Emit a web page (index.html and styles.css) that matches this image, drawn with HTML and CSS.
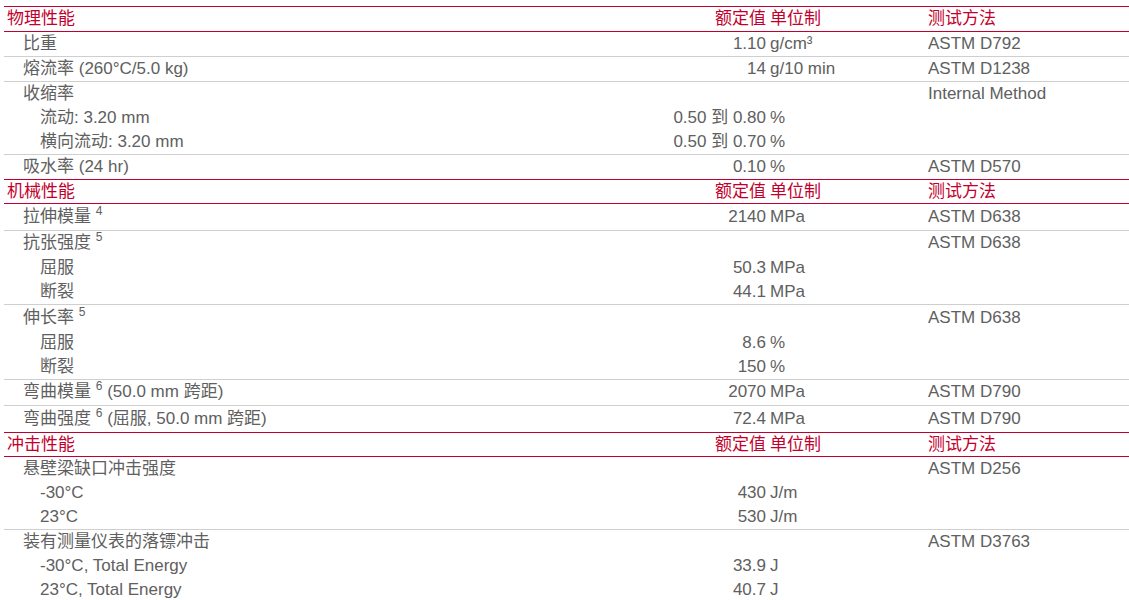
FILE: index.html
```html
<!DOCTYPE html>
<html lang="zh-CN">
<head>
<meta charset="utf-8">
<title>性能表</title>
<link rel="stylesheet" href="styles.css">
</head>
<body>
<table class="props">
  <colgroup>
    <col class="c-label">
    <col class="c-value">
    <col class="c-unit">
    <col class="c-method">
  </colgroup>
  <tbody>
    <tr class="hdr first"><th class="sec">物理性能</th><th class="val">额定值</th><th class="unit">单位制</th><th class="method">测试方法</th></tr>
    <tr class="end"><td class="l1">比重</td><td class="val">1.10</td><td class="unit">g/cm³</td><td class="method">ASTM D792</td></tr>
    <tr class="end"><td class="l1">熔流率 (260°C/5.0 kg)</td><td class="val">14</td><td class="unit">g/10 min</td><td class="method">ASTM D1238</td></tr>
    <tr><td class="l1">收缩率</td><td class="val"></td><td class="unit"></td><td class="method">Internal Method</td></tr>
    <tr><td class="l2">流动: 3.20 mm</td><td class="val">0.50 到 0.80</td><td class="unit">%</td><td class="method"></td></tr>
    <tr class="end"><td class="l2">横向流动: 3.20 mm</td><td class="val">0.50 到 0.70</td><td class="unit">%</td><td class="method"></td></tr>
    <tr><td class="l1">吸水率 (24 hr)</td><td class="val">0.10</td><td class="unit">%</td><td class="method">ASTM D570</td></tr>

    <tr class="hdr"><th class="sec">机械性能</th><th class="val">额定值</th><th class="unit">单位制</th><th class="method">测试方法</th></tr>
    <tr class="end sup-row"><td class="l1">拉伸模量 <sup>4</sup></td><td class="val">2140</td><td class="unit">MPa</td><td class="method">ASTM D638</td></tr>
    <tr class="sup-row"><td class="l1">抗张强度 <sup>5</sup></td><td class="val"></td><td class="unit"></td><td class="method">ASTM D638</td></tr>
    <tr><td class="l2">屈服</td><td class="val">50.3</td><td class="unit">MPa</td><td class="method"></td></tr>
    <tr class="end"><td class="l2">断裂</td><td class="val">44.1</td><td class="unit">MPa</td><td class="method"></td></tr>
    <tr class="sup-row"><td class="l1">伸长率 <sup>5</sup></td><td class="val"></td><td class="unit"></td><td class="method">ASTM D638</td></tr>
    <tr><td class="l2">屈服</td><td class="val">8.6</td><td class="unit">%</td><td class="method"></td></tr>
    <tr class="end"><td class="l2">断裂</td><td class="val">150</td><td class="unit">%</td><td class="method"></td></tr>
    <tr class="end sup-row"><td class="l1">弯曲模量 <sup>6</sup> (50.0 mm 跨距)</td><td class="val">2070</td><td class="unit">MPa</td><td class="method">ASTM D790</td></tr>
    <tr class="sup-row"><td class="l1">弯曲强度 <sup>6</sup> (屈服, 50.0 mm 跨距)</td><td class="val">72.4</td><td class="unit">MPa</td><td class="method">ASTM D790</td></tr>

    <tr class="hdr"><th class="sec">冲击性能</th><th class="val">额定值</th><th class="unit">单位制</th><th class="method">测试方法</th></tr>
    <tr><td class="l1">悬壁梁缺口冲击强度</td><td class="val"></td><td class="unit"></td><td class="method">ASTM D256</td></tr>
    <tr><td class="l2">-30°C</td><td class="val">430</td><td class="unit">J/m</td><td class="method"></td></tr>
    <tr class="end"><td class="l2">23°C</td><td class="val">530</td><td class="unit">J/m</td><td class="method"></td></tr>
    <tr><td class="l1">装有测量仪表的落镖冲击</td><td class="val"></td><td class="unit"></td><td class="method">ASTM D3763</td></tr>
    <tr><td class="l2">-30°C, Total Energy</td><td class="val">33.9</td><td class="unit">J</td><td class="method"></td></tr>
    <tr><td class="l2">23°C, Total Energy</td><td class="val">40.7</td><td class="unit">J</td><td class="method"></td></tr>
  </tbody>
</table>
</body>
</html>
```
FILE: styles.css
```css
html, body {
  margin: 0;
  padding: 0;
  background: #ffffff;
}

body {
  font-family: "Liberation Sans", "Noto Sans CJK SC", sans-serif;
  font-size: 17px;
  color: #606060;
  padding: 6px 0 0 4px;
}

.props {
  border-collapse: collapse;
  table-layout: fixed;
  width: 1125px;
}

.c-label { width: 602px; }
.c-value { width: 160px; }
.c-unit { width: 162px; }
.c-method { width: 201px; }

.props th,
.props td {
  padding: 0;
  line-height: 24px;
  height: 24px;
  white-space: nowrap;
  font-weight: normal;
  text-align: left;
  vertical-align: middle;
}

.props tr.hdr th {
  height: 23px;
  line-height: 23px;
  color: #c3002d;
  border-top: 1px solid #c3002d;
  border-bottom: 1px solid #c3002d;
}

.props tr.hdr.first th {
  height: 24px;
  line-height: 24px;
}

.props tr.sup-row td {
  height: 25.5px;
}

.props tr.end td {
  border-bottom: 1px solid #cfcfcf;
}

.props .sec { padding-left: 3px; }
.props .l1 { padding-left: 19px; }
.props .l2 { padding-left: 36px; }

.props .val { text-align: right; }
.props .unit { padding-left: 4px; }

.props sup {
  font-size: 12px;
  line-height: 0;
  vertical-align: 7px;
}
```
